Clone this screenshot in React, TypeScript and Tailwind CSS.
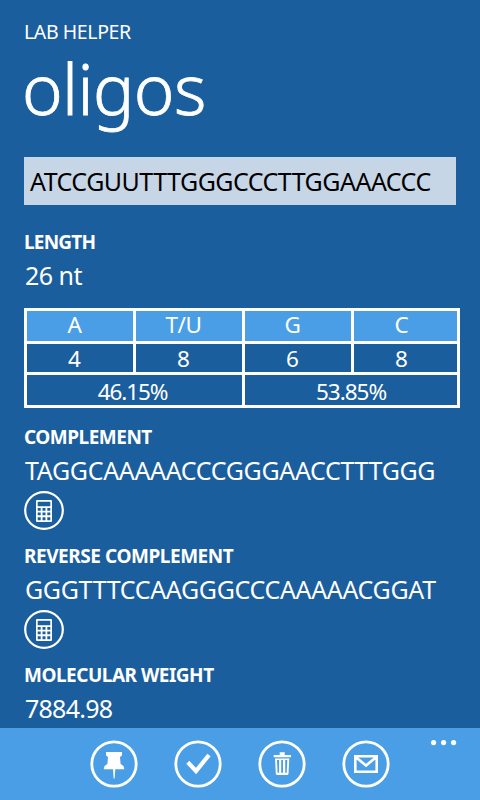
import type { ReactNode } from "react";

interface SectionProps {
  title: string;
  value: string;
  titleClass: string;
  valueClass: string;
  calculator?: boolean;
}

const CalculatorIcon = () => (
  <svg width="40" height="39" viewBox="0 0 40 39" fill="none">
    <ellipse cx="20" cy="19.5" rx="18.8" ry="18.4" stroke="white" strokeWidth="2.2" />
    <path
      fill="white"
      fillRule="evenodd"
      d="M12.7 9h14.6l.7.7v20.6l-.7.7H12.7l-.7-.7V9.700zM13.700 10.700v4.600h12.600v-4.600zM13.700 17v2.800h3v-2.800zM18.500 17v2.800h3v-2.800zM23.300 17v2.800h3v-2.800zM13.700 21.500v2.800h3v-2.800zM18.500 21.500v2.800h3v-2.800zM23.300 21.500v2.800h3v-2.800zM13.700 26.200v3h3v-3zM18.500 26.200v3h3v-3zM23.300 26.200v3h3v-3z"
    />
  </svg>
);

const Section = ({
  title,
  value,
  titleClass,
  valueClass,
  calculator,
}: SectionProps) => (
  <section className="flex flex-col">
    <h2 className={`h-[26px] text-[19px] leading-[26px] font-bold whitespace-nowrap ${titleClass}`}>
      <span>{title}</span>
    </h2>
    <p className={`mt-[3px] h-[34px] pl-px text-[25px] leading-[34px] whitespace-nowrap ${valueClass}`}>
      <span>{value}</span>
    </p>
    {calculator && (
      <button className="mt-1 h-[39px] w-10">
        <CalculatorIcon />
      </button>
    )}
  </section>
);

const AppBarButton = ({ label, children }: { label: string; children: ReactNode }) => (
  <button aria-label={label} className="size-12">
    <svg width="48" height="48" viewBox="0 0 48 48" fill="none">
      <circle cx="24" cy="24" r="22.2" stroke="white" strokeWidth="2.8" />
      {children}
    </svg>
  </button>
);

const bases = [
  { name: "A", count: 4 },
  { name: "T/U", count: 8 },
  { name: "G", count: 6 },
  { name: "C", count: 8 },
];

export default function App() {
  return (
    <div className="flex h-[800px] w-[480px] flex-col overflow-hidden bg-[#1b5e9d] font-['Noto_Sans',sans-serif] text-white">
      <main className="flex h-[728px] flex-col pt-[21px] pl-6">
        <p className="h-[20px] text-[19.500px] leading-[21px] tracking-[-0.4px]">
          <span>LAB HELPER</span>
        </p>
        <h1 className="-ml-[2px] h-[94px] text-[69px] leading-[94px] font-light tracking-[-0.6px] [-webkit-text-stroke:0.8px_white]">
          <span>oligos</span>
        </h1>

        <div className="mt-[22px] h-12 w-[432px] bg-[#c6d6e6] pl-[6px] text-[25px] leading-[48px] tracking-[-0.520px] whitespace-nowrap text-black">
          <span>ATCCGUUTTTGGGCCCTTGGAAACCC</span>
        </div>

        <div className="mt-6">
          <Section
            title="LENGTH"
            value="26 nt"
            titleClass="tracking-[-0.8px]"
            valueClass="tracking-[-0.5px]"
          />
        </div>

        <div className="mt-4 grid h-[100px] w-[436px] grid-cols-[106px_106px_106px_103px] grid-rows-[30px_28px_30px] gap-[3px] bg-white p-[3px] text-center text-[22.500px]">
          {bases.map((base) => (
            <div key={base.name} className="bg-[#4a9ee6] pr-[11px] leading-[28px] tracking-[-0.4px] nth-[4]:pr-2">
              <span>{base.name}</span>
            </div>
          ))}
          {bases.map((base) => (
            <div key={base.name} className="bg-[#1b5e9d] pr-[11px] leading-[29px] nth-[8]:pr-2">
              <span>{base.count}</span>
            </div>
          ))}
          <div className="col-span-2 bg-[#1b5e9d] pr-1 leading-[33px] tracking-[-1.1px]">
            <span>46.15%</span>
          </div>
          <div className="col-span-2 bg-[#1b5e9d] leading-[33px] tracking-[-1px]">
            <span>53.85%</span>
          </div>
        </div>

        <div className="mt-4 flex flex-col gap-[13px]">
          <Section
            title="COMPLEMENT"
            value="TAGGCAAAAACCCGGGAACCTTTGGG"
            titleClass="tracking-[-0.5px]"
            valueClass="tracking-[-0.340px]"
            calculator
          />
          <Section
            title="REVERSE COMPLEMENT"
            value="GGGTTTCCAAGGGCCCAAAAACGGAT"
            titleClass="tracking-[-0.450px]"
            valueClass="tracking-[-0.340px]"
            calculator
          />
          <Section
            title="MOLECULAR WEIGHT"
            value="7884.98"
            titleClass="tracking-[-0.5px]"
            valueClass="tracking-[-0.750px]"
          />
        </div>
      </main>

      <footer className="flex h-[72px] bg-[#4a9ee6] pt-3 pl-[90px]">
        <div className="flex gap-9">
          <AppBarButton label="pin">
            <path
              fill="white"
              d="M16 12h16v3.500l-2 1.500 .6 7 2.900 2 .8 3.300H25.300L24.600 38.500h-1L23 29.300h-9.300l.8-3.300 2.900-2 .6-7-2-1.500z"
            />
          </AppBarButton>
          <AppBarButton label="select">
            <path d="M13.800 22.300 22 31 35 15" stroke="white" strokeWidth="4.200" />
          </AppBarButton>
          <AppBarButton label="delete">
            <path
              fill="white"
              fillRule="evenodd"
              d="M21.700 12.300h5V15H33v2.200H15.700V15h6zM17 18.400h14.300L30.500 34l-1 1H18.800l-1-1zM19 20l.6 12.700h1.500V20zM23.200 20v12.700h1.800V20zM27.200 20v12.700h1.500L29.300 20z"
            />
          </AppBarButton>
          <AppBarButton label="mail">
            <path
              d="M13.300 16.200h21.400v15.600H13.300zM13.300 16.800 24 25.500l10.700-8.700"
              stroke="white"
              strokeWidth="2.600"
            />
          </AppBarButton>
        </div>
        <svg className="ml-[41px]" width="26" height="6" viewBox="0 0 26 6" fill="white">
          <circle cx="2.600" cy="2.600" r="2.600" />
          <circle cx="12.600" cy="2.600" r="2.600" />
          <circle cx="22.600" cy="2.600" r="2.600" />
        </svg>
      </footer>
    </div>
  );
}
